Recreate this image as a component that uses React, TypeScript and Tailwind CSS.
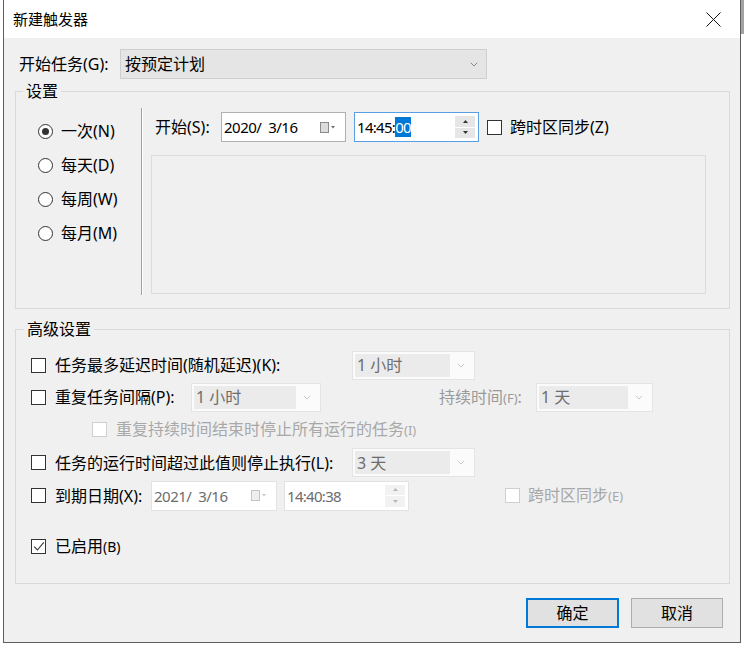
import type { ReactNode } from 'react'

function Chevron({ color = '#9a9a9a' }: { color?: string }) {
  return (
    <svg width="8" height="5" viewBox="0 0 8 5">
      <path d="M0.8 0.8 L4 4 L7.2 0.8" fill="none" stroke={color} strokeWidth="1" />
    </svg>
  )
}

function Check({ checked = false, disabled = false }: { checked?: boolean; disabled?: boolean }) {
  return (
    <span
      className={`flex h-[15px] w-[15px] shrink-0 items-center justify-center border bg-white ${
        disabled ? 'border-[#cfcfcf]' : 'border-[#333333]'
      }`}
    >
      {checked ? (
        <svg width="12" height="11" viewBox="0 0 12 11">
          <path d="M1.2 5.6 L4.4 9 L10.8 1.4" fill="none" stroke="#333333" strokeWidth="1.1" />
        </svg>
      ) : null}
    </span>
  )
}

function Radio({ checked = false, label }: { checked?: boolean; label: string }) {
  return (
    <div className="flex h-[34px] items-center gap-[8px]">
      <span className="flex h-[15px] w-[15px] items-center justify-center rounded-full border border-[#333333] bg-white">
        {checked ? <span className="h-[7px] w-[7px] rounded-full bg-[#333333]" /> : null}
      </span>
      <span>{label}</span>
    </div>
  )
}

function Combo({ value, className }: { value: string; className: string }) {
  return (
    <div className={`flex h-[29px] shrink-0 border border-[#e4e4e4] bg-[#fbfbfb] p-[2px] ${className}`}>
      <div className="flex flex-1 items-center bg-[#ebebeb] pl-[2px] text-[#6d6d6d]">{value}</div>
      <div className="flex w-[22px] items-center justify-center">
        <Chevron color="#c8c8c8" />
      </div>
    </div>
  )
}

function CalendarIcon({ disabled = false }: { disabled?: boolean }) {
  const stroke = disabled ? '#c4c4c4' : '#8a8a8a'
  const fill = disabled ? '#eeeeee' : '#dcdcdc'
  return (
    <svg width="17" height="11" viewBox="0 0 17 11">
      <rect x="0.5" y="0.5" width="8" height="10" fill={fill} stroke={stroke} />
      <path d="M11 4 L15 4 L13 6.5 Z" fill={disabled ? '#c8c8c8' : '#6a6a6a'} />
    </svg>
  )
}

function DateBox({ value, disabled = false, className }: { value: string; disabled?: boolean; className: string }) {
  return (
    <div
      className={`flex h-[30px] shrink-0 items-center justify-between border bg-white pl-[2px] pr-[8px] ${
        disabled ? 'border-[#e2e2e2] text-[#6d6d6d]' : 'border-[#b0b0b0]'
      } ${className}`}
    >
      <span className="whitespace-pre text-[15px] tracking-[-0.5px]">{value}</span>
      <CalendarIcon disabled={disabled} />
    </div>
  )
}

function Spin({ disabled = false }: { disabled?: boolean }) {
  const arrow = disabled ? '#b8b8b8' : '#333333'
  return (
    <div className="flex h-[22px] w-[20px] flex-col gap-[1px]">
      <div className={`flex flex-1 items-center justify-center ${disabled ? 'bg-[#f2f2f2]' : 'bg-[#e6e6e6]'}`}>
        <svg width="5" height="3" viewBox="0 0 5 3">
          <path d="M0 3 L2.5 0 L5 3 Z" fill={arrow} />
        </svg>
      </div>
      <div className={`flex flex-1 items-center justify-center ${disabled ? 'bg-[#f2f2f2]' : 'bg-[#e6e6e6]'}`}>
        <svg width="5" height="3" viewBox="0 0 5 3">
          <path d="M0 0 L2.5 3 L5 0 Z" fill={arrow} />
        </svg>
      </div>
    </div>
  )
}

function TimeBox({ children, disabled = false, focused = false }: { children: ReactNode; disabled?: boolean; focused?: boolean }) {
  return (
    <div
      className={`flex h-[30px] w-[125px] shrink-0 items-center justify-between border bg-white pl-[2px] pr-[3px] ${
        focused ? 'border-[#5a9fe3]' : disabled ? 'border-[#e2e2e2] text-[#6d6d6d]' : 'border-[#b0b0b0]'
      }`}
    >
      <span className="text-[15px] tracking-[-0.7px]">{children}</span>
      <Spin disabled={disabled} />
    </div>
  )
}

function Button({ children, primary = false }: { children: ReactNode; primary?: boolean }) {
  return (
    <div
      className={`flex h-[30px] items-center justify-center bg-[#e1e1e1] ${
        primary ? 'w-[93px] border-2 border-[#0078d7]' : 'w-[92px] border border-[#adadad]'
      }`}
    >
      {children}
    </div>
  )
}

export default function App() {
  return (
    <div className="flex h-[646px] w-[744px] bg-white font-['Noto_Sans','Noto_Sans_CJK_SC',sans-serif] text-[16px] leading-[18px] text-black">
      <div className="ml-[3px] flex h-[643px] w-[738px] flex-col border-x border-b border-[#5e5e5e]">
        <div className="flex h-[38px] shrink-0 items-center justify-between bg-white pl-[9px] pr-[19px] text-[15px]">
          <span>新建触发器</span>
          <svg width="15" height="15" viewBox="0 0 15 15">
            <path d="M0.5 0.5 L14.5 14.5 M14.5 0.5 L0.5 14.5" stroke="#111111" strokeWidth="1" />
          </svg>
        </div>

        <div className="flex flex-1 flex-col bg-[#f0f0f0] pl-[11px] pr-[10px]">
          <div className="mt-[11px] flex h-[30px] items-center pl-[4px]">
            <span className="w-[101px]">开始任务(G):</span>
            <div className="flex h-[30px] w-[367px] items-center justify-between border border-[#cfcfcf] bg-[#e5e5e5] pl-[4px] pr-[8px]">
              <span>按预定计划</span>
              <Chevron color="#8a8a8a" />
            </div>
          </div>

          <fieldset className="mt-[3px] border border-[#d9d9d9]">
            <legend className="ml-[7px] px-[3px] leading-[18px]">设置</legend>
            <div className="flex h-[208px]">
              <div className="flex w-[125px] flex-col pl-[22px] pt-[14px]">
                <Radio checked label="一次(N)" />
                <Radio label="每天(D)" />
                <Radio label="每周(W)" />
                <Radio label="每月(M)" />
              </div>
              <div className="mt-[8px] h-[187px] w-[2px] border-l border-r border-l-[#a0a0a0] border-r-white" />
              <div className="flex flex-col pl-[8px] pt-[12px]">
                <div className="flex h-[30px] items-center">
                  <span className="ml-[4px] w-[66px]">开始(S):</span>
                  <DateBox value="2020/  3/16" className="w-[125px]" />
                  <div className="ml-[8px]">
                    <TimeBox focused>
                      14:45:<span className="bg-[#0078d7] text-white">00</span>
                    </TimeBox>
                  </div>
                  <div className="ml-[8px]">
                    <Check />
                  </div>
                  <span className="ml-[8px]">跨时区同步(Z)</span>
                </div>
                <div className="mt-[13px] h-[139px] w-[555px] border border-[#dcdcdc]" />
              </div>
            </div>
          </fieldset>

          <fieldset className="mt-[11px] border border-[#d9d9d9]">
            <legend className="ml-[8px] px-[3px] leading-[18px]">高级设置</legend>
            <div className="flex h-[245px] flex-col pl-[15px] pt-[11px]">
              <div className="flex h-[32px] items-center">
                <Check />
                <span className="ml-[9px] w-[297px]">任务最多延迟时间(随机延迟)(K):</span>
                <Combo value="1 小时" className="w-[123px]" />
              </div>
              <div className="flex h-[32px] items-center">
                <Check />
                <span className="ml-[9px] w-[136px]">重复任务间隔(P):</span>
                <Combo value="1 小时" className="w-[130px]" />
                <span className="ml-[118px] w-[97px] text-[#9a9a9a]">
                  持续时间<span className="text-[13px]">(F)</span>:
                </span>
                <Combo value="1 天" className="w-[117px]" />
              </div>
              <div className="flex h-[33px] items-center pl-[61px]">
                <Check disabled />
                <span className="ml-[9px] text-[#a8a8a8]">
                  重复持续时间结束时停止所有运行的任务<span className="text-[13px]">(I)</span>
                </span>
              </div>
              <div className="flex h-[33px] items-center">
                <Check />
                <span className="ml-[9px] w-[297px]">任务的运行时间超过此值则停止执行(L):</span>
                <Combo value="3 天" className="w-[123px]" />
              </div>
              <div className="flex h-[33px] items-center">
                <Check />
                <span className="ml-[9px] w-[96px]">到期日期(X):</span>
                <DateBox value="2021/  3/16" disabled className="w-[126px]" />
                <div className="ml-[7px]">
                  <TimeBox disabled>14:40:38</TimeBox>
                </div>
                <div className="ml-[96px]">
                  <Check disabled />
                </div>
                <span className="ml-[8px] text-[#a8a8a8]">
                  跨时区同步<span className="text-[13px]">(E)</span>
                </span>
              </div>
              <div className="mt-[18px] flex h-[32px] items-center">
                <Check checked />
                <span className="ml-[9px]">
                  已启用<span className="text-[14px]">(B)</span>
                </span>
              </div>
            </div>
          </fieldset>

          <div className="mt-[14px] flex justify-end gap-[12px] pr-[7px]">
            <Button primary>确定</Button>
            <Button>取消</Button>
          </div>
        </div>
      </div>
      <div className="h-[34px] w-[3px] bg-[#a3a3a3]" />
    </div>
  )
}
